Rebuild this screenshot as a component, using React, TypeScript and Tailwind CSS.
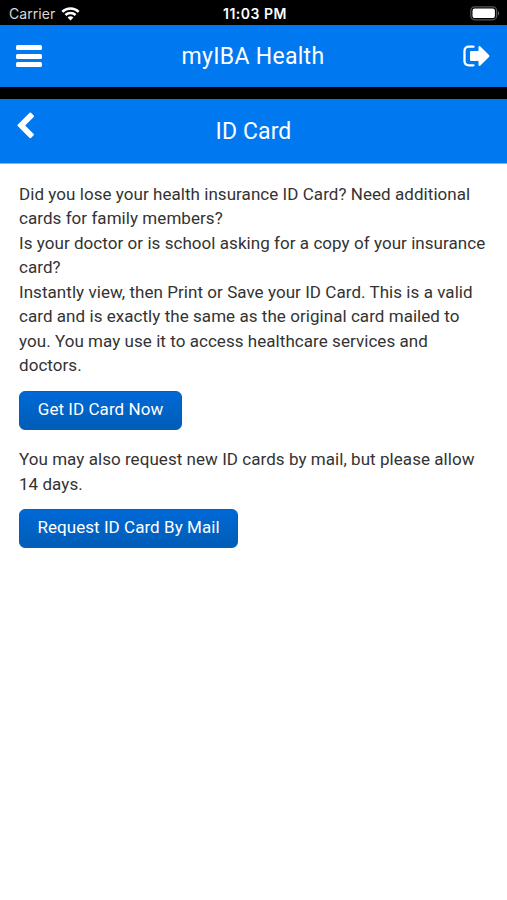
import React from 'react';

function StatusBar() {
  return (
    <div className="grid h-[25px] grid-cols-3 items-center bg-black pl-[9px] pr-[6px] pt-[2px] font-[Inter,sans-serif] text-[14px] text-white">
      <div className="flex items-center gap-[6px]">
        <span className="text-[14px] tracking-[0.05px] text-[#d9d9d9]">Carrier</span>
        <svg className="h-[14px] w-[19px]" viewBox="0 0 19 14" fill="none" stroke="white" strokeWidth="2.5">
          <path d="M1.3 4.8C5.8 .4 13.2 .4 17.7 4.8" />
          <path d="M4.4 8C7.2 5.3 11.8 5.3 14.6 8" />
          <path d="M6.6 10.4C8.2 8.9 10.8 8.9 12.4 10.4L9.5 13.4Z" fill="white" stroke="none" />
        </svg>
      </div>
      <span className="whitespace-nowrap text-center font-semibold tracking-[0.5px]">11:03 PM</span>
      <svg className="h-[15px] w-[31px] justify-self-end" viewBox="0 0 31 15">
        <rect x=".8" y=".8" width="25.8" height="13" rx="3.8" fill="black" stroke="#555" strokeWidth="1.2" />
        <rect x="2.5" y="2.5" width="22.4" height="9.6" rx="2.2" fill="white" />
        <path d="M28 5.2Q30.5 7.3 28 9.4Z" fill="#666" />
      </svg>
    </div>
  );
}

function AppHeader() {
  return (
    <header className="grid h-[62px] grid-cols-[1fr_auto_1fr] items-center bg-[#0078f0] pl-[16px] pr-[17px] text-white">
      <button aria-label="Menu" className="flex w-[26px] flex-col gap-[3.5px]">
        <span className="h-[5px] rounded-[1.5px] bg-white" />
        <span className="h-[5px] rounded-[1.5px] bg-white" />
        <span className="h-[5px] rounded-[1.5px] bg-white" />
      </button>
      <h1 className="pt-[2px] text-[23px] tracking-[0.3px]">myIBA Health</h1>
      <button aria-label="Sign out" className="justify-self-end">
        <svg className="h-[22px] w-[27px]" viewBox="0 0 27 22">
          <path d="M10.5 1.7H6Q1.5 1.7 1.5 6V16Q1.5 20.3 6 20.3H10.5" fill="none" stroke="white" strokeWidth="2.3" strokeLinecap="round" />
          <path d="M8 6H15.5V2Q15.8 .3 17.4 1.4L26 9.9Q27 11 26 12.1L17.4 20.6Q15.8 21.7 15.5 20V16H8Q7 16 7 15V7Q7 6 8 6Z" fill="white" />
        </svg>
      </button>
    </header>
  );
}

function PageHeader() {
  return (
    <div className="grid h-[65px] grid-cols-[1fr_auto_1fr] border-b border-[#79bafa] bg-[#0078f0] px-[17px] text-white">
      <button aria-label="Back" className="mt-[13px] h-[28px] w-[18px]">
        <svg className="h-[28px] w-[18px]" viewBox="0 0 18 28">
          <path d="M12.6 .8Q13.3 .1 14 .8L16.7 3.5Q17.4 4.2 16.7 4.9L8.2 13.4L16.7 21.9Q17.4 22.6 16.7 23.3L14 26Q13.3 26.7 12.6 26L.7 14.1Q0 13.4 .7 12.7Z" fill="white" />
        </svg>
      </button>
      <h2 className="self-center pt-[2px] text-[23px] tracking-[0.1px]">ID Card</h2>
    </div>
  );
}

function ActionButton({ children, className }: { children: React.ReactNode; className: string }) {
  return (
    <button className={`h-[39px] rounded-[6px] border border-[#0061bd] bg-gradient-to-b from-[#0069d6] to-[#005db8] pb-[2px] text-[17px] text-white ${className}`}>
      {children}
    </button>
  );
}

export default function App() {
  return (
    <div className="min-h-screen overflow-hidden bg-white font-[Roboto,sans-serif]">
      <StatusBar />
      <AppHeader />
      <div className="h-[12px] bg-black" />
      <PageHeader />
      <main className="px-[19px] pt-[18px] text-[17px] leading-[24.45px] tracking-[0.05px] text-[#333]">
        <p className="whitespace-nowrap">
          Did you lose your health insurance ID Card? Need additional<br />
          cards for family members?<br />
          Is your doctor or is school asking for a copy of your insurance<br />
          card?<br />
          Instantly view, then Print or Save your ID Card. This is a valid<br />
          card and is exactly the same as the original card mailed to<br />
          you. You may use it to access healthcare services and<br />
          doctors.
        </p>
        <ActionButton className="mt-[13px] block w-[163px]">Get ID Card Now</ActionButton>
        <p className="mt-[17.5px] whitespace-nowrap">
          You may also request new ID cards by mail, but please allow<br />
          14 days.
        </p>
        <ActionButton className="mt-[13px] block w-[219px]">Request ID Card By Mail</ActionButton>
      </main>
    </div>
  );
}
